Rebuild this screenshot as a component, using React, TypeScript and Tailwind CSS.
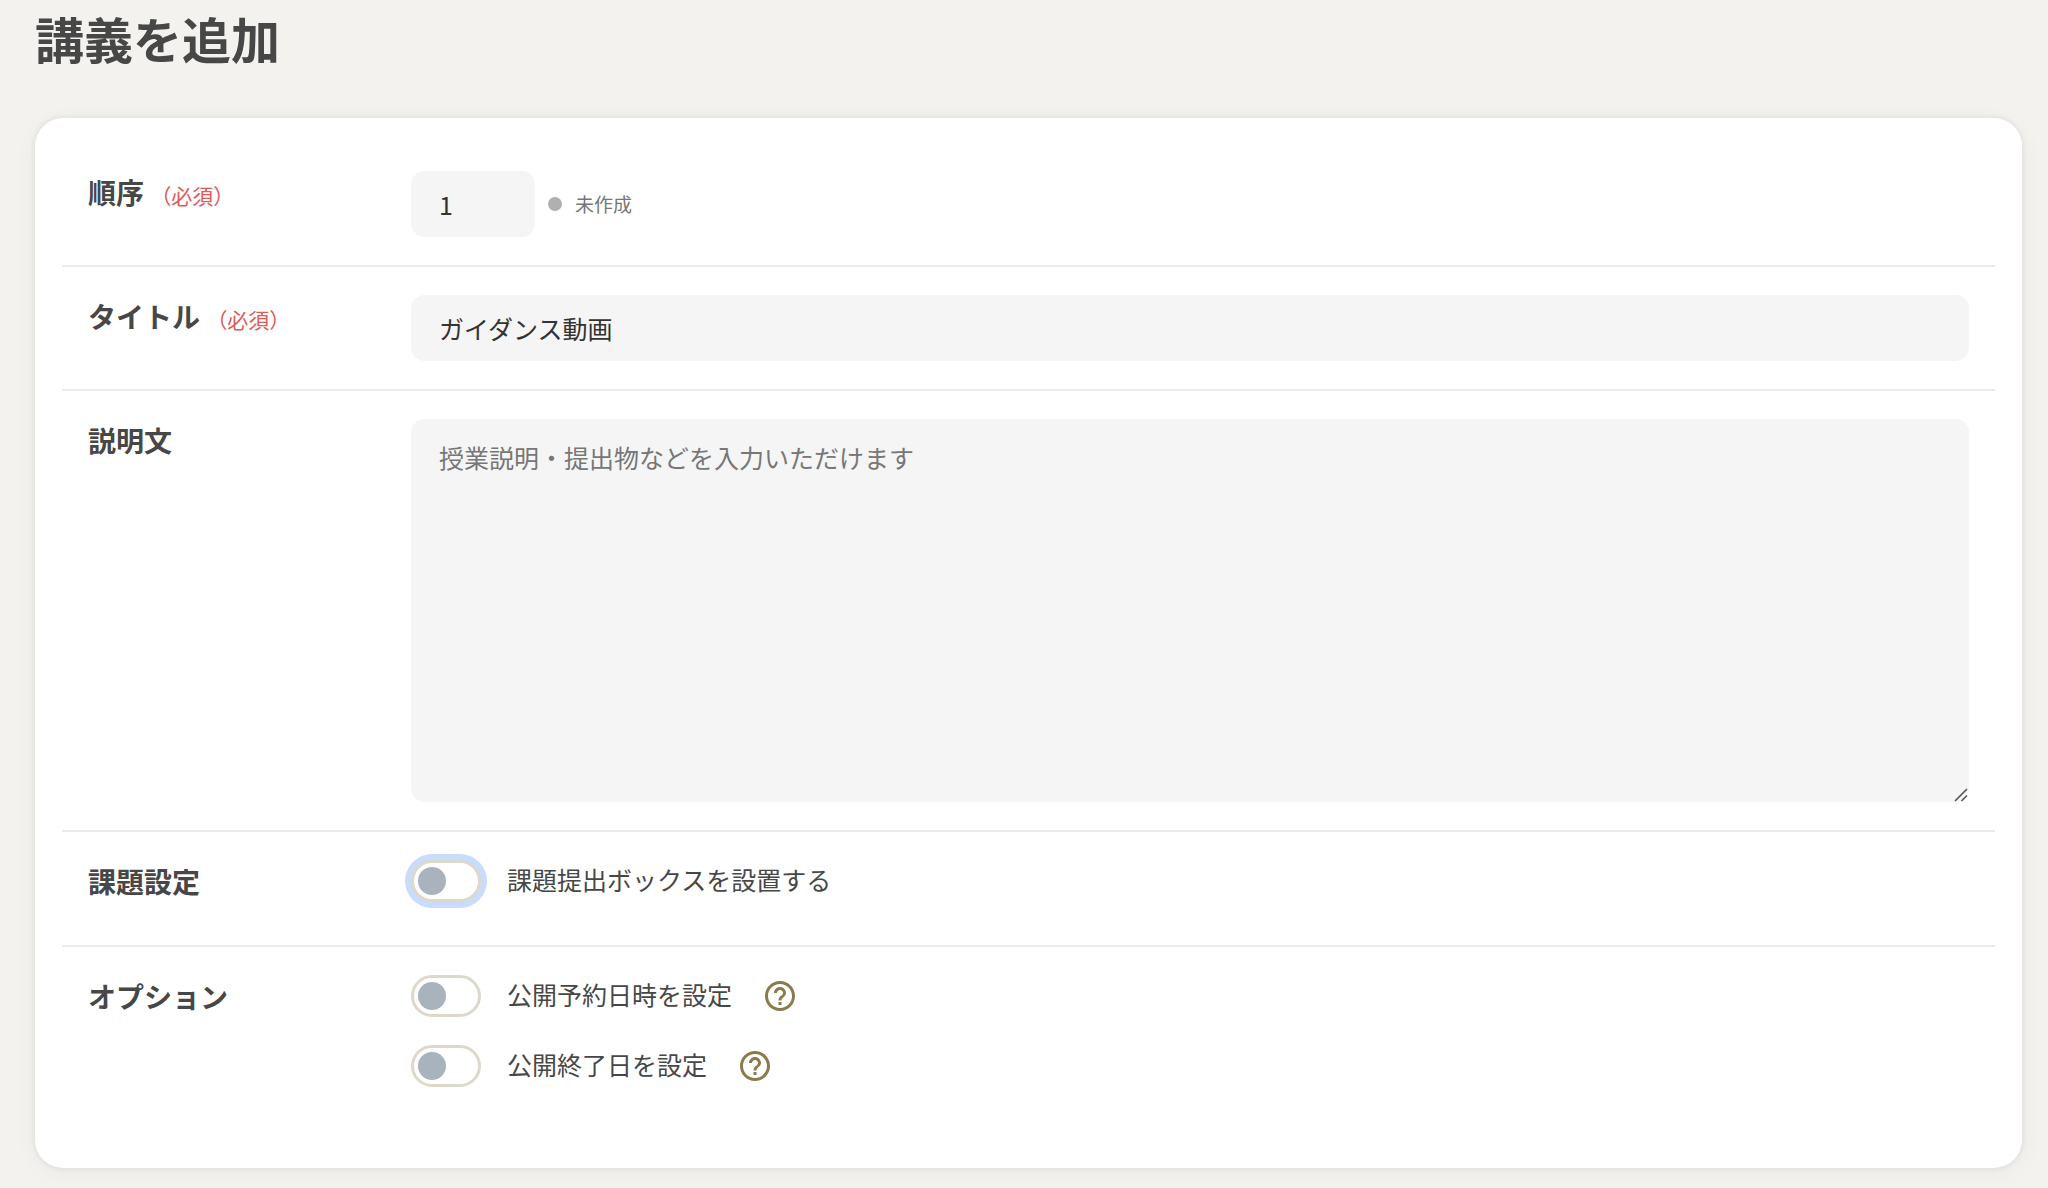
import { useState } from "react"
import type { ReactNode } from "react"
import { MdHelpOutline } from "react-icons/md"

type RowProps = {
  label: string
  htmlFor?: string
  required?: boolean
  last?: boolean
  children: ReactNode
}

function FormRow({ label, htmlFor, required, last, children }: RowProps) {
  return (
    <div className={`flex px-[26px] py-7 ${last ? "" : "border-b-2 border-[#ebebeb]"}`}>
      <div className="w-[323px] shrink-0 leading-[42px]">
        <label htmlFor={htmlFor} className="text-[28px] font-bold">
          {label} {required && <span className="text-[21px] font-normal text-[#e05a5a]">（必須）</span>}
        </label>
      </div>
      <div className="min-w-0 flex-1">{children}</div>
    </div>
  )
}

type ToggleProps = {
  id: string
  label: string
  help?: string
  autoFocus?: boolean
}

function Toggle({ id, label, help, autoFocus }: ToggleProps) {
  const [checked, setChecked] = useState(false)

  return (
    <div className="flex h-[42px] items-center">
      <input
        id={id}
        type="checkbox"
        role="switch"
        autoFocus={autoFocus}
        checked={checked}
        onChange={(e) => setChecked(e.target.checked)}
        className="h-[42px] w-[70px] shrink-0 cursor-pointer appearance-none rounded-full border-3 border-[#dcd9ca] bg-white p-1 outline-none before:block before:size-7 before:rounded-full before:bg-[#a8b3bd] before:transition-transform checked:before:translate-x-7 checked:before:bg-[#8a7b4c] focus:ring-6 focus:ring-[#c9dcfc]"
      />
      <label htmlFor={id} className="ml-[26px] cursor-pointer pb-1 text-[25px] leading-[38px]">
        {label}
      </label>
      {help && (
        <button type="button" aria-label={help} className="ml-[30px] text-[#8a7b4c]">
          <MdHelpOutline className="size-9" />
        </button>
      )}
    </div>
  )
}

export default function App() {
  const [order, setOrder] = useState("1")
  const [title, setTitle] = useState("ガイダンス動画")
  const [description, setDescription] = useState("")

  return (
    <div className="min-h-screen bg-[#f3f2ee] pr-[26px] pb-5 pl-[35px] font-['Noto_Sans_CJK_JP',sans-serif] text-[#474747]">
      <h1 className="pt-1 text-[49px] leading-[68px] font-bold">講義を追加</h1>

      <form
        onSubmit={(e) => e.preventDefault()}
        className="mt-[46px] rounded-[28px] bg-white px-[27px] pt-[25px] pb-[53px] shadow-[0_0_4px_2px_rgba(0,0,0,0.05),0_5px_26px_rgba(0,0,0,0.04)]"
      >
        <FormRow label="順序" htmlFor="order" required>
          <div className="flex items-center">
            <input
              id="order"
              type="number"
              value={order}
              onChange={(e) => setOrder(e.target.value)}
              className="h-[66px] w-[124px] rounded-[14px] bg-[#f5f5f5] px-7 text-[25px] text-[#333] outline-none"
            />
            <span className="ml-[13px] size-[14px] rounded-full bg-[#b0b0b0]"></span>
            <span className="ml-[13px] text-[19px] text-[#777]">未作成</span>
          </div>
        </FormRow>

        <FormRow label="タイトル" htmlFor="title" required>
          <input
            id="title"
            type="text"
            value={title}
            onChange={(e) => setTitle(e.target.value)}
            className="block h-[66px] w-full rounded-[14px] bg-[#f5f5f5] px-7 text-[25px] text-[#333] outline-none"
          />
        </FormRow>

        <FormRow label="説明文" htmlFor="description">
          <div className="relative">
            <textarea
              id="description"
              value={description}
              onChange={(e) => setDescription(e.target.value)}
              placeholder="授業説明・提出物などを入力いただけます"
              className="block h-[383px] w-full resize-y rounded-[14px] bg-[#f5f5f5] px-7 py-[19px] text-[25px] leading-[38px] text-[#333] outline-none placeholder:text-[#777] [&::-webkit-resizer]:hidden"
            />
            {/* Resize grip */}
            <svg
              viewBox="0 0 14 14"
              className="pointer-events-none absolute right-px bottom-0 size-[14px]"
              fill="none"
              stroke="#555"
              strokeWidth="1.6"
            >
              <path d="M1 13 L13 1 M7.5 13 L13 7.5" />
            </svg>
          </div>
        </FormRow>

        <FormRow label="課題設定">
          <div className="pb-[15px]">
            <Toggle id="assignment" label="課題提出ボックスを設置する" autoFocus />
          </div>
        </FormRow>

        <FormRow label="オプション" last>
          <div className="flex flex-col gap-7">
            <Toggle id="publish-at" label="公開予約日時を設定" help="公開予約日時について" />
            <Toggle id="close-at" label="公開終了日を設定" help="公開終了日について" />
          </div>
        </FormRow>
      </form>
    </div>
  )
}
